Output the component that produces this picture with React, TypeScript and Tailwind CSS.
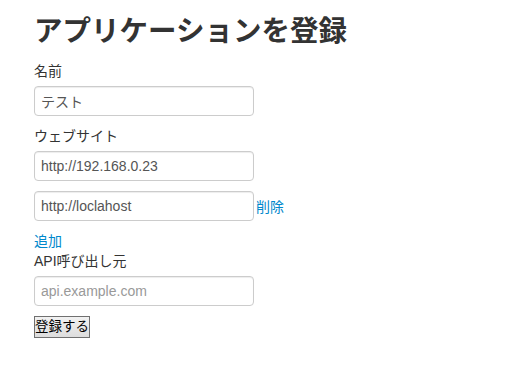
import { useState } from "react";

const font = "font-['Liberation_Sans','Noto_Sans_CJK_JP',sans-serif]";
const inputCls =
  "inline-block h-[30px] w-[220px] rounded-[4px] border border-[#cccccc] bg-white px-[6px] py-[4px] text-[14px] leading-[20px] text-[#555555] placeholder:text-[#999999] shadow-[inset_0_1px_1px_rgba(0,0,0,0.075)] outline-none";

export default function App() {
  const [name, setName] = useState("テスト");
  const [sites, setSites] = useState(["http://192.168.0.23", "http://loclahost"]);
  const [api, setApi] = useState("");

  return (
    <div className={`${font} min-h-screen bg-white px-[34px] text-[14px] leading-[20px] text-[#333333]`}>
      <h1 className="mt-[11px] mb-[10px] text-[28.5px] font-bold leading-[40px] text-[#333333]">
        アプリケーションを登録
      </h1>
      <form onSubmit={(e) => e.preventDefault()}>
        <label className="mb-[5px] block">名前</label>
        <input
          className={`${inputCls} mb-[10px]`}
          value={name}
          onChange={(e) => setName(e.target.value)}
        />

        <label className="mb-[5px] block">ウェブサイト</label>
        {sites.map((s, i) => (
          <div key={i} className="mb-[10px] flex items-end">
            <input
              className={inputCls}
              value={s}
              onChange={(e) =>
                setSites(sites.map((v, j) => (j === i ? e.target.value : v)))
              }
            />
            {i > 0 && (
              <a
                href="#"
                className="ml-[2px] mb-[4px] text-[#0088cc]"
                onClick={(e) => {
                  e.preventDefault();
                  setSites(sites.filter((_, j) => j !== i));
                }}
              >
                削除
              </a>
            )}
          </div>
        ))}
        <a
          href="#"
          className="block text-[#0088cc]"
          onClick={(e) => {
            e.preventDefault();
            setSites([...sites, ""]);
          }}
        >
          追加
        </a>

        <label className="mb-[5px] block">API呼び出し元</label>
        <input
          className={`${inputCls} mb-[10px]`}
          placeholder="api.example.com"
          value={api}
          onChange={(e) => setApi(e.target.value)}
        />
        <div>
          <button
            type="submit"
            className="h-[22px] border border-[#707070] bg-gradient-to-b from-[#f2f2f2] to-[#dddddd] px-0 text-[13.5px] leading-[20px] text-black"
          >
            登録する
          </button>
        </div>
      </form>
    </div>
  );
}
